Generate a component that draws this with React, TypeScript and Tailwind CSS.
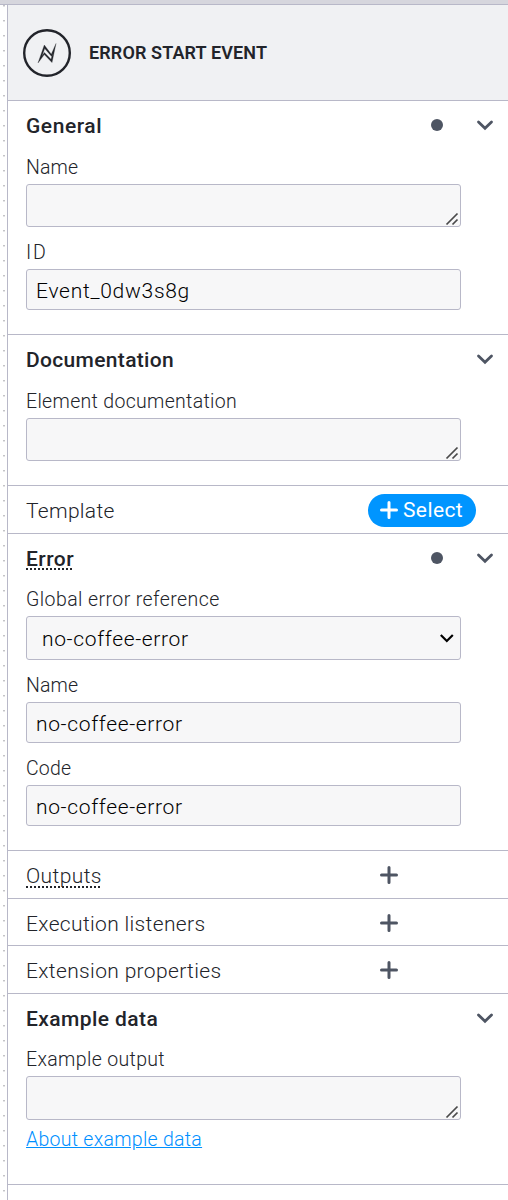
import type { ReactNode } from "react";

const FONT = "font-['Roboto','Noto_Sans',sans-serif]";

function Chevron() {
  return (
    <svg className="h-[12px] w-[18px] shrink-0" viewBox="0 0 18 12" fill="none" stroke="#4e5563" strokeWidth="2.8" strokeLinecap="round" strokeLinejoin="miter">
      <path d="M2.5 3 9 9.200l6.500-6.200" />
    </svg>
  );
}

function Plus({ color }: { color: string }) {
  return (
    <svg className="h-[18px] w-[18px] shrink-0" viewBox="0 0 18 18" fill="none" stroke={color} strokeWidth="3" strokeLinecap="round">
      <path d="M9 1.500v15M1.500 9h15" />
    </svg>
  );
}

function DottedLine({ bottom }: { bottom: string }) {
  return (
    <span
      className={`absolute right-0 left-0 h-[2px] bg-[repeating-linear-gradient(90deg,#22242a_0_2px,transparent_2px_4px)] ${bottom}`}
    />
  );
}

function GroupHeader({ title, tracking, dot, dotted }: { title: string; tracking: string; dot?: boolean; dotted?: boolean }) {
  return (
    <div className="flex h-12 items-center pr-[14px]">
      <span className={`relative mt-[2px] text-[21px] leading-[26px] font-medium text-[#22242a] ${tracking}`}>
        {title}
        {dotted && <DottedLine bottom="bottom-[2px]" />}
      </span>
      <span className="flex-1" />
      {dot && <span className="mr-[33px] size-3 rounded-full bg-[#4e5563]" />}
      <Chevron />
    </div>
  );
}

function Field({ label, tracking, first, children }: { label: string; tracking: string; first?: boolean; children: ReactNode }) {
  return (
    <div className={first ? "" : "pt-[7px]"}>
      <div className={`flex h-[35px] items-center pt-[2px] text-[19.5px] font-light text-[#22242a] ${tracking}`}>{label}</div>
      {children}
    </div>
  );
}

const BOX = "w-[435px] rounded-[3px] border border-[#b8b8c8] bg-[#f7f7f8]";

function TextArea({ height }: { height: string }) {
  return (
    <div className={`flex items-end justify-end ${BOX} ${height}`}>
      <svg className="mr-[1px] h-[15px] w-[15px]" viewBox="0 0 15 15" fill="none" stroke="#4a4a4a" strokeWidth="1.700">
        <path d="M2.500 13.500 13.500 2.500M8.500 13.500 13.500 8.500" />
      </svg>
    </div>
  );
}

function Input({ value, tracking }: { value: string; tracking: string }) {
  return (
    <div className={`flex h-[41px] items-center pt-[4px] pl-[9px] text-[21px] font-light text-black ${BOX} ${tracking}`}>{value}</div>
  );
}

function ListRow({ title, tracking, size, dotted }: { title: string; tracking: string; size: string; dotted?: boolean }) {
  return (
    <div className={`flex items-center border-b border-[#b8b8c8] pl-[18px] ${size}`}>
      <span className={`relative mt-[2px] w-fit text-[21px] leading-[26px] font-light text-[#22242a] ${tracking}`}>
        {title}
        {dotted && <DottedLine bottom="bottom-px" />}
      </span>
      <span className="flex-1" />
      <span className="mr-[110px] flex">
        <Plus color="#4e5563" />
      </span>
    </div>
  );
}

export default function App() {
  return (
    <div className={`flex h-[1200px] w-[508px] flex-col overflow-hidden bg-white ${FONT}`}>
      <div className="h-[5px] shrink-0 border-b border-[#b8b8c8] bg-[#d6d6dd]" />
      <div className="flex min-h-0 flex-1">
        <div className="w-[7px] shrink-0 bg-[radial-gradient(circle_at_4px_0.500px,#c4c4c8_0.900px,transparent_1.300px)] bg-[size:15px_15px]" />
        <div className="flex min-w-0 flex-1 flex-col border-l border-[#b8b8c8]">
          <header className="flex h-24 shrink-0 items-center border-b border-[#b8b8c8] bg-[#f0f1f3] pl-[15px]">
            <svg className="mt-px h-12 w-12" viewBox="0 0 48 48" fill="none" stroke="#22242a">
              <circle cx="24" cy="24" r="22.800" strokeWidth="2.400" />
              <path
                fill="#22242a"
                stroke="#22242a"
                strokeWidth="0.300"
                fillRule="evenodd"
                d="M15 34 21.300 16 28.300 25.200 33 14.500 29 33.600 21.300 25.600ZM21.700 19.600 19 27 21.400 23.500 28 30.300 30.300 23 28.600 27.400Z"
              />
            </svg>
            <h1 className="ml-[18px] text-[18px] font-semibold tracking-[0.120px] text-[#22242a]">ERROR START EVENT</h1>
          </header>

          <section className="border-b border-[#b8b8c8] pb-6 pl-[18px]">
            <GroupHeader title="General" tracking="tracking-[0.550px]" dot />
            <Field label="Name" tracking="tracking-[0.100px]" first>
              <TextArea height="h-[43px]" />
            </Field>
            <Field label="ID" tracking="tracking-[1.800px]">
              <Input value="Event_0dw3s8g" tracking="tracking-[0.720px]" />
            </Field>
          </section>

          <section className="border-b border-[#b8b8c8] pb-6 pl-[18px]">
            <GroupHeader title="Documentation" tracking="tracking-[0.330px]" />
            <Field label="Element documentation" tracking="tracking-[0.320px]" first>
              <TextArea height="h-[43px]" />
            </Field>
          </section>

          <div className="flex h-12 shrink-0 items-center border-b border-[#b8b8c8] pr-8 pl-[18px]">
            <span className="mt-[5px] text-[21px] font-light tracking-[0.300px] text-[#22242a]">Template</span>
            <span className="flex-1" />
            <button className="mt-px flex h-[33px] w-[108px] items-center rounded-full bg-[#0095ff] pl-3 text-white">
              <Plus color="#ffffff" />
              <span className="mt-[2px] ml-[5px] text-[21px] tracking-[0.400px]">Select</span>
            </button>
          </div>

          <section className="border-b border-[#b8b8c8] pb-6 pl-[18px]">
            <GroupHeader title="Error" tracking="tracking-[0.450px]" dot dotted />
            <div className="-mt-px">
              <Field label="Global error reference" tracking="tracking-[0.420px]" first>
                <div className={`flex h-[44px] items-center justify-between pr-[6px] pl-[15px] ${BOX}`}>
                  <span className="mt-[3px] text-[21px] font-light tracking-[0.650px] text-black">no-coffee-error</span>
                  <svg className="h-[10px] w-[15px]" viewBox="0 0 15 10" fill="none" stroke="#000" strokeWidth="2.200">
                    <path d="M1.800 2 7.800 8l6-6" />
                  </svg>
                </div>
              </Field>
            </div>
            <Field label="Name" tracking="tracking-[0.100px]">
              <Input value="no-coffee-error" tracking="tracking-[0.650px]" />
            </Field>
            <Field label="Code" tracking="tracking-[0.150px]">
              <Input value="no-coffee-error" tracking="tracking-[0.650px]" />
            </Field>
          </section>

          <ListRow title="Outputs" tracking="tracking-[0.400px]" size="h-12 pt-px" dotted />
          <ListRow title="Execution listeners" tracking="tracking-[0.340px]" size="h-[47px] pt-[2px]" />
          <ListRow title="Extension properties" tracking="tracking-[0.350px]" size="h-12 pt-px" />

          <section className="h-[191px] shrink-0 border-b border-[#b8b8c8] pl-[18px]">
            <GroupHeader title="Example data" tracking="tracking-[0.420px]" />
            <div className="-mt-px">
              <Field label="Example output" tracking="tracking-[0.350px]" first>
                <TextArea height="h-[44px]" />
              </Field>
            </div>
            <a className="mt-[7px] inline-block text-[19.5px] leading-[26px] font-light tracking-[0.280px] text-[#0090ff] underline" href="#about">
              About example data
            </a>
          </section>
        </div>
      </div>
    </div>
  );
}
